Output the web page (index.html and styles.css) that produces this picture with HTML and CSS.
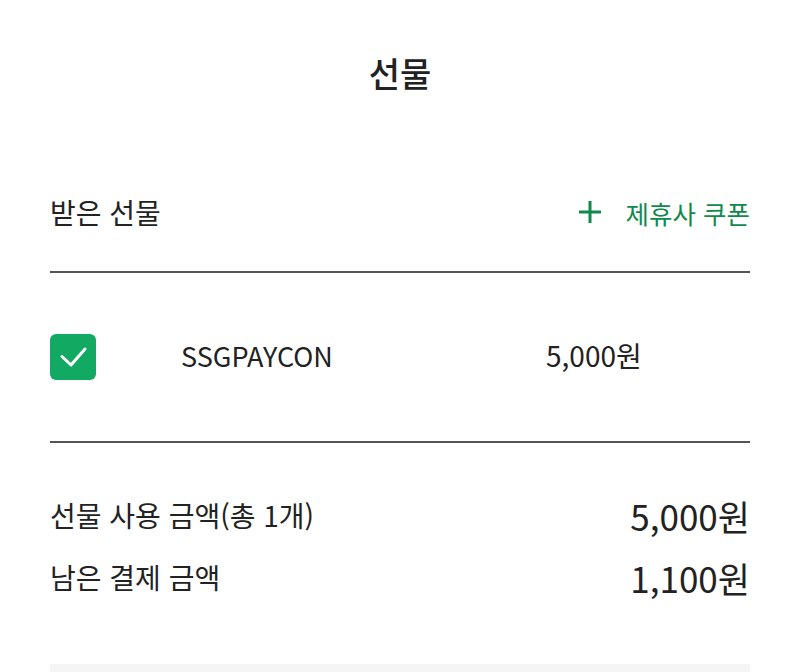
FILE: index.html
```html
<!DOCTYPE html>
<html lang="ko">
<head>
<meta charset="utf-8">
<link rel="stylesheet" href="styles.css">
</head>
<body>
<div class="page">
  <h1 class="title">선물</h1>
  <div class="head-row">
    <span class="head-label">받은 선물</span>
    <button class="coupon-btn">
      <svg class="plus" width="24" height="24" viewBox="0 0 24 24"><path d="M12 1V23M1 12H23" stroke="#0f8a4c" stroke-width="3" fill="none"/></svg>
      <span>제휴사 쿠폰</span>
    </button>
  </div>
  <div class="divider"></div>
  <div class="item-row">
    <span class="check">
      <svg width="46" height="46" viewBox="0 0 46 46"><path d="M12 22.5L21 31L35 15" stroke="#fff" stroke-width="3" fill="none" stroke-linecap="round" stroke-linejoin="round"/></svg>
    </span>
    <span class="item-name">SSGPAYCON</span>
    <span class="item-price">5,000원</span>
  </div>
  <div class="divider"></div>
  <div class="summary">
    <div class="sum-row">
      <span class="sum-label">선물 사용 금액(총 1개)</span>
      <span class="sum-value">5,000원</span>
    </div>
    <div class="sum-row">
      <span class="sum-label">남은 결제 금액</span>
      <span class="sum-value">1,100원</span>
    </div>
  </div>
  <div class="bottom-box"></div>
</div>
</body>
</html>
```
FILE: styles.css
```css
* { box-sizing: border-box; }
html, body { margin: 0; padding: 0; background: #fff; }
body { font-family: "Noto Sans CJK KR", "Noto Sans", sans-serif; color: #222; }
.page { width: 700px; margin: 0 auto; padding-top: 46px; }
.title { margin: 0; text-align: center; font-size: 34px; font-weight: 500; line-height: 54px; color: #222; }
.head-row { display: flex; justify-content: space-between; align-items: center; margin-top: 86px; height: 52px; }
.head-label { font-size: 28px; line-height: 40px; }
.coupon-btn { display: flex; align-items: center; gap: 24px; background: none; border: 0; padding: 0; font: inherit; font-size: 25.5px; color: #0f8a4c; }
.plus { display: block; }
.divider { height: 2px; background: #555; margin-top: 33px; }
.item-row { display: flex; align-items: center; height: 168px; }
.item-row + .divider { margin-top: 0; }
.check { width: 46px; height: 46px; border-radius: 6px; background: #12aa62; display: block; flex: none; }
.check svg { display: block; }
.item-name { margin-left: 85px; font-size: 27px; width: 365px; padding-bottom: 4px; }
.item-price { font-size: 28px; padding-bottom: 4px; }
.summary { padding-top: 48px; display: flex; flex-direction: column; gap: 14px; }
.sum-row { display: flex; justify-content: space-between; align-items: center; height: 48px; }
.sum-label { font-size: 28px; }
.sum-value { font-size: 35px; }
.bottom-box { margin-top: 63px; height: 9px; background: #f5f5f5; }
```
